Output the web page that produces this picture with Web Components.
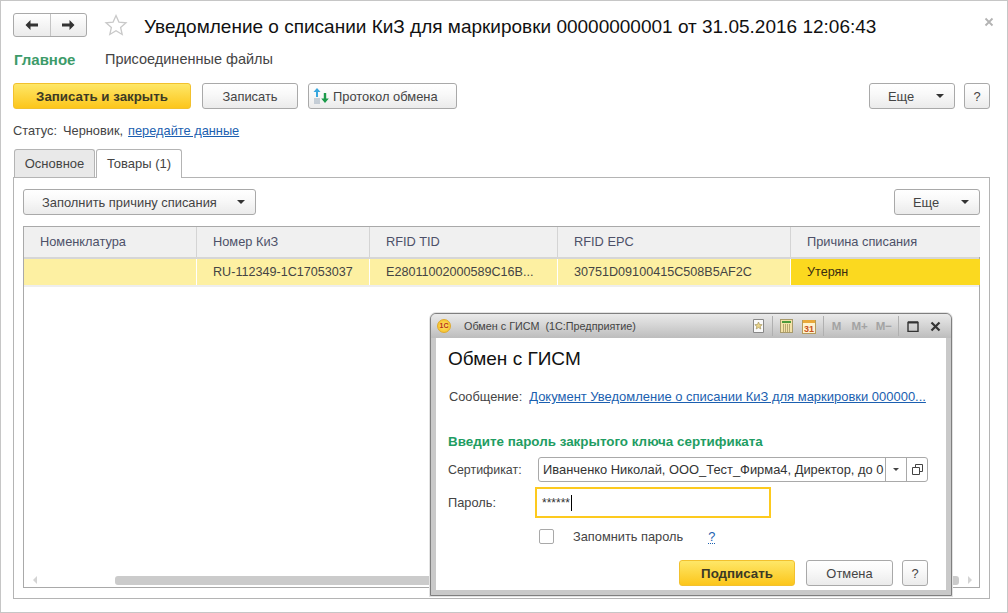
<!DOCTYPE html>
<html lang="ru"><head><meta charset="utf-8"><title>Уведомление</title>
<style>
html,body{margin:0;padding:0;background:#fff}
body{font:12px "Liberation Sans",Arial,sans-serif;color:#333}
</style></head><body>
<x-form>
  <x-head slot="head" title-text="Уведомление о списании КиЗ для маркировки 00000000001 от 31.05.2016 12:06:43"></x-head>
  <x-sections slot="sections"></x-sections>
  <div slot="commands" style="display:contents">
    <x-btn kind="primary" w="178">Записать и закрыть</x-btn>
    <x-btn w="96" style="margin-left:11px">Записать</x-btn>
    <x-btn w="149" icon="exchange" style="margin-left:10px">Протокол обмена</x-btn>
    <span style="flex:1"></span>
    <x-btn w="86" menu>Еще</x-btn>
    <x-btn w="26" style="margin-left:9px">?</x-btn>
  </div>
  <x-status slot="status"></x-status>
  <x-tabs slot="tabs">
    <div style="display:flex;align-items:center">
      <x-btn w="233" menu>Заполнить причину списания</x-btn>
      <span style="flex:1"></span>
      <x-btn w="86" menu>Еще</x-btn>
    </div>
    <x-grid></x-grid>
  </x-tabs>
</x-form>
<x-dialog></x-dialog>
<script>
function def(name,html,setup){
  customElements.define(name,class extends HTMLElement{
    constructor(){super();this.attachShadow({mode:'open'}).innerHTML=html;}
    connectedCallback(){if(setup)setup.call(this,this.shadowRoot);}
  });
}
def('x-form',`<style>
:host{display:flex;flex-direction:column;box-sizing:border-box;width:1008px;height:613px;border:1px solid #c6c6c6;padding:12px 17px 12px 12px;position:relative}
.cmd{display:flex;align-items:center;margin-top:14px;height:26px}
</style>
<slot name="head"></slot><slot name="sections"></slot>
<div class="cmd"><slot name="commands"></slot></div>
<slot name="status"></slot><slot name="tabs"></slot>`);

def('x-head',`<style>
:host{display:flex;align-items:center;height:24px;position:relative}
.nav{display:flex;box-sizing:border-box;width:74px;height:24px;border:1px solid #a9a9a9;border-radius:3px;background:linear-gradient(#fff,#ebebeb)}
.nav span{flex:1;display:flex;align-items:center;justify-content:center}
.nav span+span{border-left:1px solid #c4c4c4}
.star{margin-left:17px;display:block}
h1{margin:0 0 0 16px;align-self:flex-start;font:400 19px/28px "Liberation Sans",Arial,sans-serif;color:#111;white-space:nowrap}
.x{position:absolute;left:970px;top:3px;display:block}
</style>
<div class="nav">
<span><svg width="15" height="12" viewBox="0 0 15 12"><path d="M6.5 1 1.5 6l5 5V7.5H14v-3H6.5z" fill="#333"/></svg></span>
<span><svg width="15" height="12" viewBox="0 0 15 12"><path d="M8.5 1l5 5-5 5V7.5H1v-3h7.5z" fill="#333"/></svg></span>
</div>
<svg class="star" width="24" height="24" viewBox="0 0 24 24"><path d="M12 2.500l2.900 6.600 7.100.7-5.400 4.700 1.600 7-6.200-3.700-6.200 3.700 1.600-7L2 9.800l7.100-.7z" fill="#fff" stroke="#c9c9c9" stroke-width="1.300"/></svg>
<h1></h1>
<svg class="x" width="12" height="12" viewBox="0 0 12 12"><path d="M2.500 2.500l7 7M9.500 2.500l-7 7" stroke="#b3b3b3" stroke-width="1.800"/></svg>`,function(r){r.querySelector('h1').textContent=this.getAttribute('title-text');});

def('x-sections',`<style>
:host{display:flex;height:20px;margin-top:12px;align-items:center;font-size:14.500px;color:#444}
b{color:#3d9b6a;font-size:15px;margin-left:1px;width:91px}
</style><b>Главное</b><span>Присоединенные файлы</span>`);

def('x-btn',`<style>
:host{display:inline-block;flex:none}
button{box-sizing:border-box;display:flex;align-items:center;justify-content:center;height:26px;padding:0;margin:0;width:100%;border:1px solid #a9a9a9;border-radius:3px;background:linear-gradient(#fff 0%,#f9f9f9 40%,#ebebeb 100%);font:12.900px "Liberation Sans",Arial,sans-serif;color:#444;white-space:nowrap}
button.primary{border-color:#f2c12e;background:linear-gradient(#fee768,#fcc61b);font-weight:700;color:#3c3a24;font-size:13.300px}
.t{display:block}
.menu,.withicon{justify-content:flex-start}
.arrow{display:none;width:0;height:0;border:4px solid transparent;border-top:4px solid #333;border-bottom:0;margin-left:auto;margin-right:10px}
svg{display:none;margin:0 3px 0 4px}
</style><button><svg width="17" height="18" viewBox="0 0 17 18"><path d="M4 1 .5 5H3v5h2V5h2.500z" fill="#38a7df"/><path d="M12 16l3.800-4.500H13.200V6h-2.400v5.500H8.200z" fill="#1c9a4a"/><path d="M1 12h6M1 14h6M1 16h6" stroke="#9ab" stroke-width="1"/></svg><span class="t"><slot></slot></span><span class="arrow"></span></button>`,function(r){
  const b=r.querySelector('button');
  this.style.width=this.getAttribute('w')+'px';
  if(this.getAttribute('kind')==='primary')b.classList.add('primary');
  if(this.getAttribute('icon')){b.classList.add('withicon');r.querySelector('svg').style.display='block';}
  if(this.hasAttribute('menu')){b.classList.add('menu');r.querySelector('.arrow').style.display='block';r.querySelector('.t').style.marginLeft='18px';}
});

def('x-status',`<style>
:host{display:flex;height:16px;margin-top:13px;align-items:center;font-size:12.800px;color:#444}
a{color:#1b5fb0;text-decoration:underline;margin-left:5px}
.s{margin-right:6px}
</style><span class="s">Статус:</span><span>Черновик,</span><a>передайте данные</a>`);

def('x-tabs',`<style>
:host{display:block;margin-top:11px}
.bar{display:flex;height:28px;padding-left:1px;position:relative;z-index:1}
.tab{box-sizing:border-box;height:28px;border:1px solid #b4b4b4;border-bottom:0;border-radius:3px 3px 0 0;font-size:13px;line-height:27px;color:#444;text-align:center;background:#e9e9e9}
.a{width:81px}
.b{width:86px;background:#fff;height:29px;margin-left:1px}
.panel{box-sizing:border-box;width:977px;height:422px;border:1px solid #b4b4b4;padding:11px 9px 10px}
</style><div class="bar"><div class="tab a">Основное</div><div class="tab b">Товары (1)</div></div>
<div class="panel"><slot></slot></div>`);

def('x-grid',`<style>
:host{display:block;box-sizing:border-box;width:957px;height:362px;margin-top:11px;border:1px solid #a9a9a9;position:relative;font-size:12.600px}
.row{display:grid;grid-template-columns:172px 172px 187px 232px 189px;column-gap:1px}
.row div{padding-left:16px;white-space:nowrap;overflow:hidden;box-sizing:border-box}
.h{height:30px;background:#d4d4d4}
.h div{background:#f0f0f0;line-height:29px;color:#4d5068;font-size:12.800px}
.sep{height:2px;background:#d6d6d6}
.d{height:26px;background:#fff}
.d div{background:#fdf0a2;line-height:26px;color:#444}
.d .sel{background:#fbd91f;color:#3a2d10}
.line{height:2px;background:#eee}
.sb{position:absolute;left:0;right:0;bottom:2px;height:9px}
.thumb{position:absolute;left:91px;right:20px;top:0;height:9px;border-radius:3px;background:#cbcbcb}
.l{position:absolute;left:9px;top:0;border:4.500px solid transparent;border-left:0;border-right:4px solid #d4d4d4}
.r{position:absolute;right:7px;top:0;border:4.500px solid transparent;border-right:0;border-left:4px solid #d4d4d4}
</style>
<div class="row h"><div>Номенклатура</div><div>Номер КиЗ</div><div>RFID TID</div><div>RFID EPC</div><div>Причина списания</div></div>
<div class="sep"></div>
<div class="row d"><div></div><div>RU-112349-1C17053037</div><div>E28011002000589C16B...</div><div>30751D09100415C508B5AF2C</div><div class="sel">Утерян</div></div>
<div class="line"></div>
<div class="sb"><span class="l"></span><span class="thumb"></span><span class="r"></span></div>`);

def('x-dialog',`<style>
:host{position:absolute;left:430px;top:313px;width:522px;height:283px;box-sizing:border-box;border:1px solid #7f7f7f;border-radius:6px 6px 0 0;background:#c9c9c9;box-shadow:0 0 0 1px #e3e3e3;display:flex;flex-direction:column;color:#444;font-size:12.800px}
.tb{display:flex;align-items:center;height:24px;flex:none;padding-left:6px;background:linear-gradient(#eaeaea,#bdbdbd);border-radius:5px 5px 0 0;color:#444;font-size:10.800px}
.logo{width:14px;height:14px;border-radius:50%;background:radial-gradient(#ffe26a,#f4bb1d);border:1px solid #e0a92a;box-sizing:border-box;font:700 7px/12px "Liberation Sans",sans-serif;color:#b5301a;text-align:center;flex:none}
.cap{margin-left:13px;white-space:pre}
.sp{flex:1}
.tools{display:flex;align-items:center}
.tools svg{display:block}
.div{width:1px;height:20px;background:#b0b0b0}
.m{font-weight:700;color:#a3a3a3;font-size:11.500px}
.body{flex:1;background:#fff;margin:0 5px 5px;padding:11px 17px 0 12px;display:flex;flex-direction:column}
h2{margin:0;font:400 19px/20px "Liberation Sans",Arial,sans-serif;color:#111}
.msg{display:flex;margin-top:20px;margin-left:1px;line-height:16px;white-space:nowrap}
.msg a{color:#1b5fb0;text-decoration:underline;margin-left:7px;font-size:12.980px}
.hint{margin-top:29px;font-weight:700;color:#1f9d63;line-height:16px;font-size:13.400px}
.r1{display:flex;align-items:center;margin-top:7px;height:25px}
.lab{width:90px;flex:none}
.r1 .lab{font-size:12.400px}
.f{box-sizing:border-box;width:390px;height:25px;border:1px solid #a9a9a9;border-radius:3px;display:flex;align-items:stretch;overflow:hidden;font-size:12.900px;color:#333}
.v{width:346px;flex:none;padding-left:4px;box-sizing:border-box;line-height:23px;white-space:nowrap}
.dd,.op{border-left:1px solid #a9a9a9;display:flex;align-items:center;justify-content:center;width:20px;flex:none}
.dd i{width:0;height:0;border:3px solid transparent;border-top:3px solid #444;border-bottom:0}
.r2{display:flex;align-items:center;margin-top:5px;height:31px}
.r2 .lab{width:87px}
.pw{box-sizing:border-box;width:236px;height:31px;border:2px solid #fdca1e;padding-left:5px;display:flex;align-items:center;font-size:12px;color:#333}
.caret{width:1px;height:16px;background:#000;margin-left:1px}
.r3{display:flex;align-items:center;margin-top:11px;height:15px;margin-left:91px}
.cb{box-sizing:border-box;width:15px;height:15px;border:1px solid #a9a9a9;border-radius:2px}
.r3 span{margin-left:19px}
.r3 u{margin-left:25px;color:#1b5fb0;text-decoration:none;border-bottom:1px dotted #1b5fb0;line-height:13px}
.btns{display:flex;margin-top:16px;margin-left:231px}
</style>
<div class="tb"><div class="logo">1С</div><span class="cap">Обмен с ГИСМ  (1С:Предприятие)</span><span class="sp"></span>
<div class="tools">
<svg width="13" height="14" viewBox="0 0 13 14"><path d="M1.500.500h10v13h-10z" fill="#fafafa" stroke="#888"/><path d="M6.500 3l1.100 2.500 2.600.2-2 1.700.6 2.600-2.300-1.400-2.300 1.400.6-2.600-2-1.700 2.600-.2z" fill="#e9d48a" stroke="#9a8a50" stroke-width=".6"/></svg>
<span class="div" style="margin:0 7px"></span>
<svg width="13" height="14" viewBox="0 0 13 14"><rect x=".5" y=".5" width="12" height="13" fill="#f4e2a8" stroke="#a89a6a"/><rect x="2" y="2" width="9" height="2" fill="#4e9a3c"/><path d="M3 6h7M3 8h7M3 10h7M3 12h7" stroke="#7a6a3a" stroke-dasharray="1 1"/></svg>
<svg style="margin-left:9px" width="14" height="15" viewBox="0 0 14 15"><rect x=".5" y="1.500" width="13" height="13" fill="#fff3cf" stroke="#b59a5a"/><rect x="1" y="1" width="12" height="3" fill="#e9a93a"/><text x="7" y="13" font-size="9" font-weight="700" text-anchor="middle" fill="#c8501a" font-family="Liberation Sans">31</text></svg>
<span class="div" style="margin:0 8px 0 7px"></span>
<span class="m" style="margin-right:10px">M</span><span class="m" style="margin-right:8px">M+</span><span class="m">M−</span>
<span class="div" style="margin:0 8px 0 6px"></span>
<svg width="12" height="11" viewBox="0 0 12 11"><path d="M1 1.500h10v9H1z" fill="none" stroke="#333" stroke-width="1.400"/><path d="M1 1.300h10" stroke="#333" stroke-width="2"/></svg>
<svg style="margin:0 10px 0 11px" width="11" height="11" viewBox="0 0 11 11"><path d="M1.500 1.500l8 8M9.500 1.500l-8 8" stroke="#333" stroke-width="2.200"/></svg>
</div></div>
<div class="body">
<h2>Обмен с ГИСМ</h2>
<div class="msg"><span>Сообщение:</span><a>Документ Уведомление о списании КиЗ для маркировки 000000...</a></div>
<div class="hint">Введите пароль закрытого ключа сертификата</div>
<div class="r1"><span class="lab">Сертификат:</span><div class="f"><div class="v">Иванченко Николай, ООО_Тест_Фирма4, Директор, до 0</div><div class="dd"><i></i></div><div class="op"><svg width="11" height="11" viewBox="0 0 11 11"><path d="M3.500 3V.5h7v7H8M.5 3.500h7v7h-7z" fill="none" stroke="#444"/></svg></div></div></div>
<div class="r2"><span class="lab">Пароль:</span><div class="pw">******<span class="caret"></span></div></div>
<div class="r3"><div class="cb"></div><span>Запомнить пароль</span><u>?</u></div>
<div class="btns"><x-btn kind="primary" w="116">Подписать</x-btn><x-btn w="87" style="margin-left:11px">Отмена</x-btn><x-btn w="26" style="margin-left:9px">?</x-btn></div>
</div>`);
</script>
</body></html>
